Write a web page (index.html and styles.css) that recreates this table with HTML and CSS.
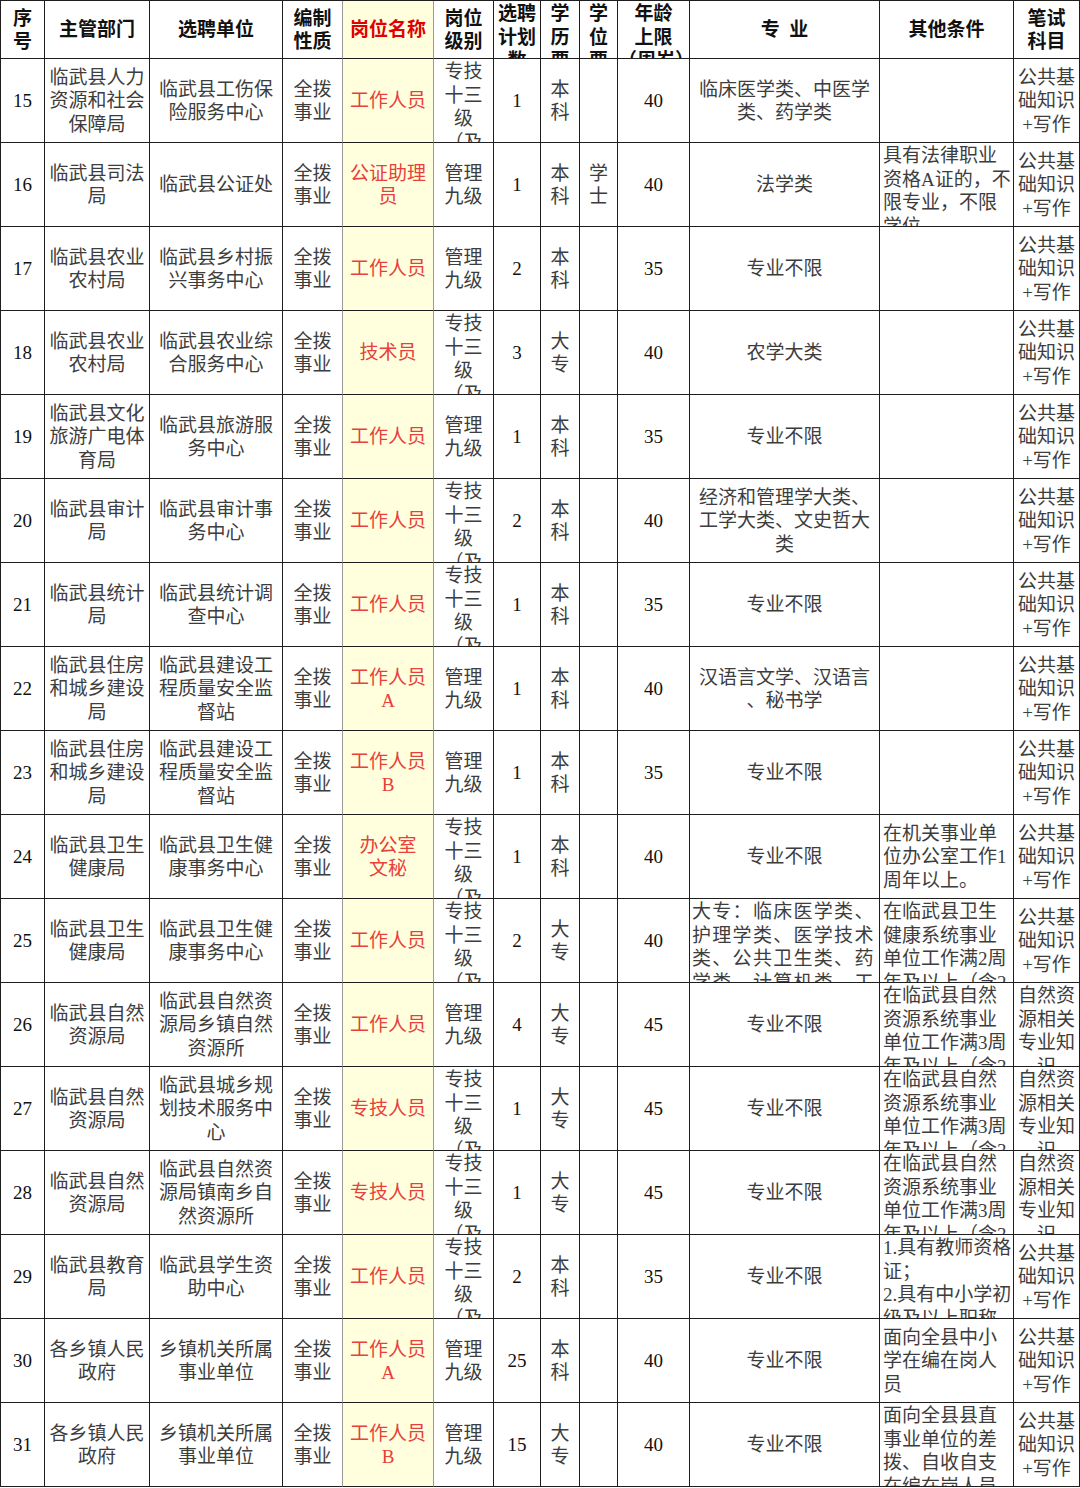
FILE: index.html
```html
<!DOCTYPE html>
<html lang="zh">
<head>
<meta charset="utf-8">
<title>临武县选聘岗位表</title>
<link rel="stylesheet" href="styles.css">
</head>
<body>
<div class="sheet">
  <div class="c h">序<br>号</div>
  <div class="c h">主管部门</div>
  <div class="c h">选聘单位</div>
  <div class="c h g">编制<br>性质</div>
  <div class="c h y g hr">岗位名称</div>
  <div class="c h">岗位<br>级别</div>
  <div class="c h">选聘<br>计划<br>数</div>
  <div class="c h">学<br>历<br>要<br>求</div>
  <div class="c h">学<br>位<br>要<br>求</div>
  <div class="c h">年龄<br>上限<br>（周岁）</div>
  <div class="c h">专&nbsp;&nbsp;业</div>
  <div class="c h">其他条件</div>
  <div class="c h">笔试<br>科目</div>

  <!-- 15 -->
  <div class="c n">15</div>
  <div class="c">临武县人力<br>资源和社会<br>保障局</div>
  <div class="c">临武县工伤保<br>险服务中心</div>
  <div class="c g">全拨<br>事业</div>
  <div class="c y g r">工作人员</div>
  <div class="c">专技<br>十三<br>级<br>（及<br>以上）</div>
  <div class="c n">1</div>
  <div class="c">本<br>科</div>
  <div class="c"></div>
  <div class="c n">40</div>
  <div class="c">临床医学类、中医学<br>类、药学类</div>
  <div class="c l"></div>
  <div class="c">公共基<br>础知识<br>+写作</div>

  <!-- 16 -->
  <div class="c n">16</div>
  <div class="c">临武县司法<br>局</div>
  <div class="c">临武县公证处</div>
  <div class="c g">全拨<br>事业</div>
  <div class="c y g r">公证助理<br>员</div>
  <div class="c">管理<br>九级</div>
  <div class="c n">1</div>
  <div class="c">本<br>科</div>
  <div class="c">学<br>士</div>
  <div class="c n">40</div>
  <div class="c">法学类</div>
  <div class="c l">具有法律职业<br>资格A证的，不<br>限专业，不限<br>学位</div>
  <div class="c">公共基<br>础知识<br>+写作</div>

  <!-- 17 -->
  <div class="c n">17</div>
  <div class="c">临武县农业<br>农村局</div>
  <div class="c">临武县乡村振<br>兴事务中心</div>
  <div class="c g">全拨<br>事业</div>
  <div class="c y g r">工作人员</div>
  <div class="c">管理<br>九级</div>
  <div class="c n">2</div>
  <div class="c">本<br>科</div>
  <div class="c"></div>
  <div class="c n">35</div>
  <div class="c">专业不限</div>
  <div class="c l"></div>
  <div class="c">公共基<br>础知识<br>+写作</div>

  <!-- 18 -->
  <div class="c n">18</div>
  <div class="c">临武县农业<br>农村局</div>
  <div class="c">临武县农业综<br>合服务中心</div>
  <div class="c g">全拨<br>事业</div>
  <div class="c y g r">技术员</div>
  <div class="c">专技<br>十三<br>级<br>（及<br>以上）</div>
  <div class="c n">3</div>
  <div class="c">大<br>专</div>
  <div class="c"></div>
  <div class="c n">40</div>
  <div class="c">农学大类</div>
  <div class="c l"></div>
  <div class="c">公共基<br>础知识<br>+写作</div>

  <!-- 19 -->
  <div class="c n">19</div>
  <div class="c">临武县文化<br>旅游广电体<br>育局</div>
  <div class="c">临武县旅游服<br>务中心</div>
  <div class="c g">全拨<br>事业</div>
  <div class="c y g r">工作人员</div>
  <div class="c">管理<br>九级</div>
  <div class="c n">1</div>
  <div class="c">本<br>科</div>
  <div class="c"></div>
  <div class="c n">35</div>
  <div class="c">专业不限</div>
  <div class="c l"></div>
  <div class="c">公共基<br>础知识<br>+写作</div>

  <!-- 20 -->
  <div class="c n">20</div>
  <div class="c">临武县审计<br>局</div>
  <div class="c">临武县审计事<br>务中心</div>
  <div class="c g">全拨<br>事业</div>
  <div class="c y g r">工作人员</div>
  <div class="c">专技<br>十三<br>级<br>（及<br>以上）</div>
  <div class="c n">2</div>
  <div class="c">本<br>科</div>
  <div class="c"></div>
  <div class="c n">40</div>
  <div class="c">经济和管理学大类、<br>工学大类、文史哲大<br>类</div>
  <div class="c l"></div>
  <div class="c">公共基<br>础知识<br>+写作</div>

  <!-- 21 -->
  <div class="c n">21</div>
  <div class="c">临武县统计<br>局</div>
  <div class="c">临武县统计调<br>查中心</div>
  <div class="c g">全拨<br>事业</div>
  <div class="c y g r">工作人员</div>
  <div class="c">专技<br>十三<br>级<br>（及<br>以上）</div>
  <div class="c n">1</div>
  <div class="c">本<br>科</div>
  <div class="c"></div>
  <div class="c n">35</div>
  <div class="c">专业不限</div>
  <div class="c l"></div>
  <div class="c">公共基<br>础知识<br>+写作</div>

  <!-- 22 -->
  <div class="c n">22</div>
  <div class="c">临武县住房<br>和城乡建设<br>局</div>
  <div class="c">临武县建设工<br>程质量安全监<br>督站</div>
  <div class="c g">全拨<br>事业</div>
  <div class="c y g r">工作人员<br>A</div>
  <div class="c">管理<br>九级</div>
  <div class="c n">1</div>
  <div class="c">本<br>科</div>
  <div class="c"></div>
  <div class="c n">40</div>
  <div class="c">汉语言文学、汉语言<br>、秘书学</div>
  <div class="c l"></div>
  <div class="c">公共基<br>础知识<br>+写作</div>

  <!-- 23 -->
  <div class="c n">23</div>
  <div class="c">临武县住房<br>和城乡建设<br>局</div>
  <div class="c">临武县建设工<br>程质量安全监<br>督站</div>
  <div class="c g">全拨<br>事业</div>
  <div class="c y g r">工作人员<br>B</div>
  <div class="c">管理<br>九级</div>
  <div class="c n">1</div>
  <div class="c">本<br>科</div>
  <div class="c"></div>
  <div class="c n">35</div>
  <div class="c">专业不限</div>
  <div class="c l"></div>
  <div class="c">公共基<br>础知识<br>+写作</div>

  <!-- 24 -->
  <div class="c n">24</div>
  <div class="c">临武县卫生<br>健康局</div>
  <div class="c">临武县卫生健<br>康事务中心</div>
  <div class="c g">全拨<br>事业</div>
  <div class="c y g r">办公室<br>文秘</div>
  <div class="c">专技<br>十三<br>级<br>（及<br>以上）</div>
  <div class="c n">1</div>
  <div class="c">本<br>科</div>
  <div class="c"></div>
  <div class="c n">40</div>
  <div class="c">专业不限</div>
  <div class="c l">在机关事业单<br>位办公室工作1<br>周年以上。</div>
  <div class="c">公共基<br>础知识<br>+写作</div>

  <!-- 25 -->
  <div class="c n">25</div>
  <div class="c">临武县卫生<br>健康局</div>
  <div class="c">临武县卫生健<br>康事务中心</div>
  <div class="c g">全拨<br>事业</div>
  <div class="c y g r">工作人员</div>
  <div class="c">专技<br>十三<br>级<br>（及<br>以上）</div>
  <div class="c n">2</div>
  <div class="c">大<br>专</div>
  <div class="c"></div>
  <div class="c n">40</div>
  <div class="c l sp">大专：临床医学类、<br>护理学类、医学技术<br>类、公共卫生类、药<br>学类、计算机类、工<br>学类</div>
  <div class="c l">在临武县卫生<br>健康系统事业<br>单位工作满2周<br>年及以上（含2<br>周年）</div>
  <div class="c">公共基<br>础知识<br>+写作</div>

  <!-- 26 -->
  <div class="c n">26</div>
  <div class="c">临武县自然<br>资源局</div>
  <div class="c">临武县自然资<br>源局乡镇自然<br>资源所</div>
  <div class="c g">全拨<br>事业</div>
  <div class="c y g r">工作人员</div>
  <div class="c">管理<br>九级</div>
  <div class="c n">4</div>
  <div class="c">大<br>专</div>
  <div class="c"></div>
  <div class="c n">45</div>
  <div class="c">专业不限</div>
  <div class="c l">在临武县自然<br>资源系统事业<br>单位工作满3周<br>年及以上（含3<br>周年）</div>
  <div class="c">自然资<br>源相关<br>专业知<br>识</div>

  <!-- 27 -->
  <div class="c n">27</div>
  <div class="c">临武县自然<br>资源局</div>
  <div class="c">临武县城乡规<br>划技术服务中<br>心</div>
  <div class="c g">全拨<br>事业</div>
  <div class="c y g r">专技人员</div>
  <div class="c">专技<br>十三<br>级<br>（及<br>以上）</div>
  <div class="c n">1</div>
  <div class="c">大<br>专</div>
  <div class="c"></div>
  <div class="c n">45</div>
  <div class="c">专业不限</div>
  <div class="c l">在临武县自然<br>资源系统事业<br>单位工作满3周<br>年及以上（含3<br>周年）</div>
  <div class="c">自然资<br>源相关<br>专业知<br>识</div>

  <!-- 28 -->
  <div class="c n">28</div>
  <div class="c">临武县自然<br>资源局</div>
  <div class="c">临武县自然资<br>源局镇南乡自<br>然资源所</div>
  <div class="c g">全拨<br>事业</div>
  <div class="c y g r">专技人员</div>
  <div class="c">专技<br>十三<br>级<br>（及<br>以上）</div>
  <div class="c n">1</div>
  <div class="c">大<br>专</div>
  <div class="c"></div>
  <div class="c n">45</div>
  <div class="c">专业不限</div>
  <div class="c l">在临武县自然<br>资源系统事业<br>单位工作满3周<br>年及以上（含3<br>周年）</div>
  <div class="c">自然资<br>源相关<br>专业知<br>识</div>

  <!-- 29 -->
  <div class="c n">29</div>
  <div class="c">临武县教育<br>局</div>
  <div class="c">临武县学生资<br>助中心</div>
  <div class="c g">全拨<br>事业</div>
  <div class="c y g r">工作人员</div>
  <div class="c">专技<br>十三<br>级<br>（及<br>以上）</div>
  <div class="c n">2</div>
  <div class="c">本<br>科</div>
  <div class="c"></div>
  <div class="c n">35</div>
  <div class="c">专业不限</div>
  <div class="c l">1.具有教师资格<br>证；<br>2.具有中小学初<br>级及以上职称</div>
  <div class="c">公共基<br>础知识<br>+写作</div>

  <!-- 30 -->
  <div class="c n">30</div>
  <div class="c">各乡镇人民<br>政府</div>
  <div class="c">乡镇机关所属<br>事业单位</div>
  <div class="c g">全拨<br>事业</div>
  <div class="c y g r">工作人员<br>A</div>
  <div class="c">管理<br>九级</div>
  <div class="c n">25</div>
  <div class="c">本<br>科</div>
  <div class="c"></div>
  <div class="c n">40</div>
  <div class="c">专业不限</div>
  <div class="c l">面向全县中小<br>学在编在岗人<br>员</div>
  <div class="c">公共基<br>础知识<br>+写作</div>

  <!-- 31 -->
  <div class="c n">31</div>
  <div class="c">各乡镇人民<br>政府</div>
  <div class="c">乡镇机关所属<br>事业单位</div>
  <div class="c g">全拨<br>事业</div>
  <div class="c y g r">工作人员<br>B</div>
  <div class="c">管理<br>九级</div>
  <div class="c n">15</div>
  <div class="c">大<br>专</div>
  <div class="c"></div>
  <div class="c n">40</div>
  <div class="c">专业不限</div>
  <div class="c l">面向全县县直<br>事业单位的差<br>拨、自收自支<br>在编在岗人员</div>
  <div class="c">公共基<br>础知识<br>+写作</div>
</div>
</body>
</html>
```
FILE: styles.css
```css
* { box-sizing: border-box; }
html, body { margin: 0; padding: 0; background: #ffffff; }

.sheet {
  display: grid;
  grid-template-columns: 44px 105px 133px 60px 91px 60px 47px 39px 38px 72px 190px 134px 66px;
  grid-template-rows: 58px repeat(17, 84px);
  width: 1080px;
  border-top: 1px solid #1e1e1e;
  border-left: 1px solid #1e1e1e;
  font-family: "Liberation Serif", "Noto Sans CJK SC", serif;
  font-size: 19px;
  line-height: 23.5px;
  color: #3d3d3d;
}

.c {
  display: flex;
  flex-direction: column;
  justify-content: safe center;
  overflow: hidden;
  white-space: nowrap;
  text-align: center;
  padding: 1px 0 0;
  border-right: 1px solid #1e1e1e;
  border-bottom: 1px solid #1e1e1e;
}

.h { font-weight: bold; color: #111111; }
.hr { color: #e00000; }

.g { border-right-color: #9a9a9a; }
.y { background: #ffffde; }
.r { color: #e8403a; }

.n { color: #111111; }

.l { text-align: left; padding-left: 3px; }
.sp { letter-spacing: 1.3px; padding-left: 2px; }
```
